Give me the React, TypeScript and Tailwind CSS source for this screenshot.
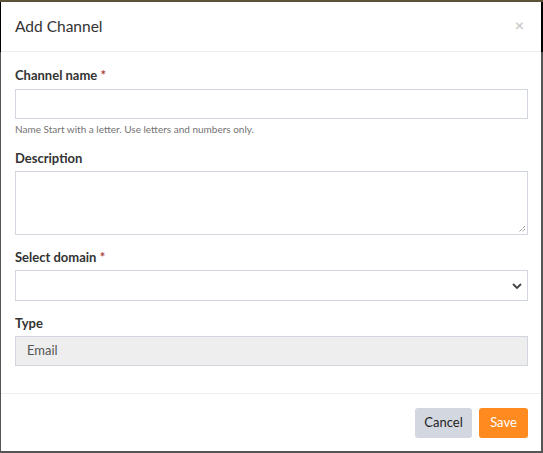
import React from "react";

export default function App() {
  const font = { fontFamily: "Lato, 'Noto Sans', sans-serif" };
  return (
    <div className="w-[543px] h-[453px] flex flex-col bg-[#555555]" style={font}>
      <div className="h-[2px] bg-[#5b5238]" />
      <div className="flex flex-1 min-h-0">
        <div className="w-px flex flex-col">
          <div className="h-[50px] bg-black" />
          <div className="flex-1 bg-[#555555]" />
        </div>
        <div className="flex-1 bg-white flex flex-col">
          <div className="h-[50px] border-b border-[#eeeeee] flex items-center justify-between pl-[14px] pr-[17px]">
            <h4 className="text-[15.5px] text-[#333333] leading-none">Add Channel</h4>
            <span className="text-[#cccccc] text-[16px] font-bold leading-none -mt-[4px]">×</span>
          </div>
          <div className="flex-1 pl-[14px] pr-[13px] pt-[14px]">
            <label className="block text-[13px] font-bold text-[#333333] leading-[18px] mb-[5px]">
              Channel name <span className="text-[#a94442]">*</span>
            </label>
            <div className="h-[30px] border border-[#d2d6de]" />
            <p className="text-[10px] text-[#737373] mt-[4px] leading-[13px]">
              Name Start with a letter. Use letters and numbers only.
            </p>
            <label className="block text-[13px] font-bold text-[#333333] leading-[18px] mt-[13px] mb-[4px]">
              Description
            </label>
            <div className="h-[64px] border border-[#d2d6de] relative">
              <svg className="absolute right-[1px] bottom-[1px]" width="8" height="8" viewBox="0 0 8 8">
                <path d="M7 1 L1 7 M7 4 L4 7" stroke="#777" strokeWidth="1" strokeDasharray="1 1" />
              </svg>
            </div>
            <label className="block text-[13px] font-bold text-[#333333] leading-[18px] mt-[13px] mb-[4px]">
              Select domain <span className="text-[#a94442]">*</span>
            </label>
            <div className="h-[31px] border border-[#d2d6de] flex items-center justify-end pr-[5px]">
              <svg width="10" height="6" viewBox="0 0 10 6">
                <path d="M1 1 L5 5 L9 1" stroke="#444" strokeWidth="1.8" fill="none" />
              </svg>
            </div>
            <label className="block text-[13px] font-bold text-[#333333] leading-[18px] mt-[13px] mb-[4px]">
              Type
            </label>
            <div className="h-[30px] border border-[#d2d6de] bg-[#eeeeee] flex items-center pl-[11px] text-[13px] text-[#555555]">
              Email
            </div>
          </div>
          <div className="border-t border-[#f0f0f0] h-[58px] flex items-start justify-end gap-[7px] pt-[14px] pr-[13px]">
            <button className="h-[30px] w-[57px] rounded-[3px] bg-[#d3d7df] text-[13px] text-[#222222]">Cancel</button>
            <button className="h-[30px] w-[49px] rounded-[3px] bg-[#ff8a1f] text-[13px] text-white">Save</button>
          </div>
        </div>
        <div className="w-[2px] flex flex-col">
          <div className="h-[50px] bg-black" />
          <div className="flex-1 bg-[#555555]" />
        </div>
      </div>
      <div className="h-[2px] bg-[#555555]" />
    </div>
  );
}
